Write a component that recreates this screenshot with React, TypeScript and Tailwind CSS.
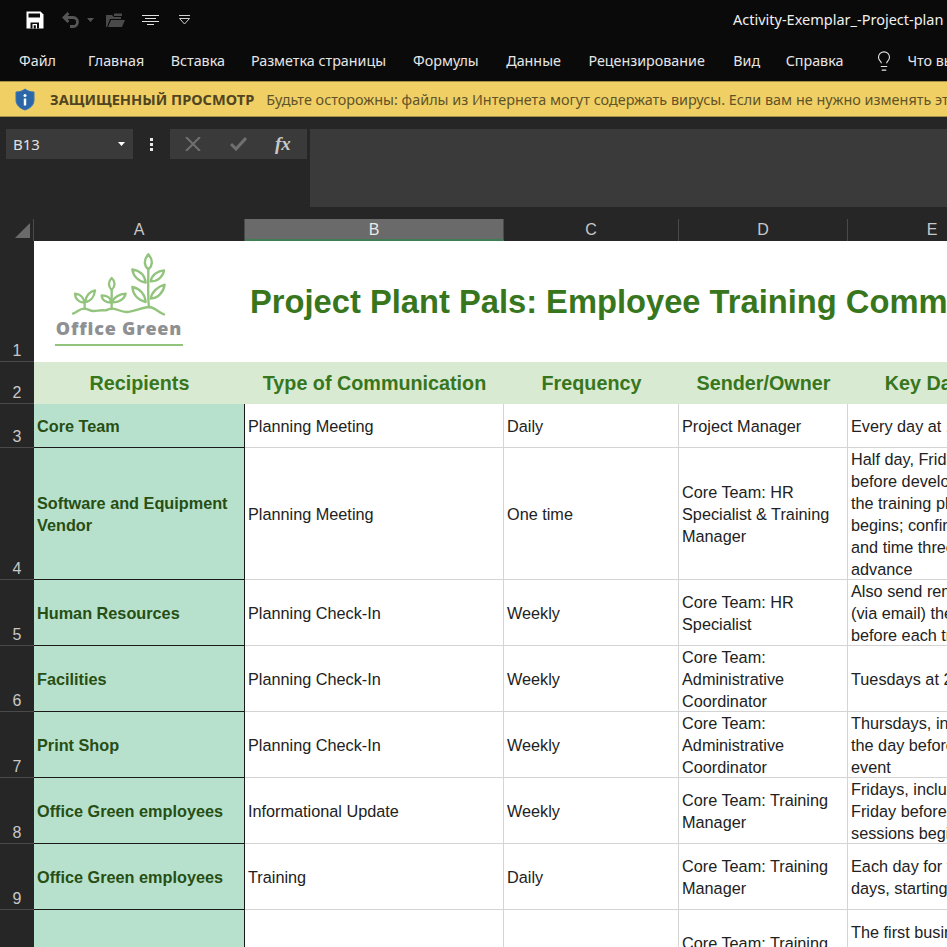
import React from 'react';
import { Lightbulb } from 'lucide-react';

const menu = [
  ['Файл', 'ml-[19px]'],
  ['Главная', 'ml-[32px]'],
  ['Вставка', 'ml-[26.500px]'],
  ['Разметка страницы', 'ml-[26px]'],
  ['Формулы', 'ml-[27px]'],
  ['Данные', 'ml-[27.500px]'],
  ['Рецензирование', 'ml-[27.500px]'],
  ['Вид', 'ml-[28.500px]'],
  ['Справка', 'ml-[25.500px]'],
];

const columns = [
  { label: 'A', className: 'w-[211px]' },
  { label: 'B', className: 'w-[259px] bg-[#6a6a6a] border-b-2 border-b-[#3f7d55] text-[#e8e8e8]' },
  { label: 'C', className: 'w-[175px]' },
  { label: 'D', className: 'w-[169px]' },
  { label: 'E', className: 'w-[169px]' },
];

const rows = [
  { n: 3, h: 'h-[44px]', a: ['Core Team'], b: 'Planning Meeting', c: 'Daily', d: ['Project Manager'], e: ['Every day at 10:00 a.m.'] },
  {
    n: 4,
    h: 'h-[132px]',
    a: ['Software and Equipment', 'Vendor'],
    b: 'Planning Meeting',
    c: 'One time',
    d: ['Core Team: HR', 'Specialist & Training', 'Manager'],
    e: ['Half day, Friday', 'before development', 'the training plan', 'begins; confirm date', 'and time three days', 'advance'],
  },
  { n: 5, h: 'h-[66px]', a: ['Human Resources'], b: 'Planning Check-In', c: 'Weekly', d: ['Core Team: HR', 'Specialist'], e: ['Also send reminder', '(via email) the day', 'before each training'] },
  { n: 6, h: 'h-[66px]', a: ['Facilities'], b: 'Planning Check-In', c: 'Weekly', d: ['Core Team:', 'Administrative', 'Coordinator'], e: ['Tuesdays at 2:00 p.m.'] },
  { n: 7, h: 'h-[66px]', a: ['Print Shop'], b: 'Planning Check-In', c: 'Weekly', d: ['Core Team:', 'Administrative', 'Coordinator'], e: ['Thursdays, including', 'the day before the', 'event'] },
  { n: 8, h: 'h-[66px]', a: ['Office Green employees'], b: 'Informational Update', c: 'Weekly', d: ['Core Team: Training', 'Manager'], e: ['Fridays, including the', 'Friday before training', 'sessions begin'] },
  { n: 9, h: 'h-[66px]', a: ['Office Green employees'], b: 'Training', c: 'Daily', d: ['Core Team: Training', 'Manager'], e: ['Each day for five', 'days, starting'] },
  { n: 10, h: 'h-[66px]', a: [''], b: '', c: '', d: ['', 'Core Team: Training', 'Manager'], e: ['The first business day', 'after trainings end'] },
];

function Logo() {
  const c = '#93c47d';
  return (
    <div className="flex flex-col items-center w-[130px]">
      <svg width="100" height="65" viewBox="60 20 300 195" fill="none" stroke={c} strokeWidth="7" strokeLinecap="round" strokeLinejoin="round">
        <path d="M72 205C85 200 92 190 105 190C118 190 122 198 135 197C148 196 155 194 165 195C175 196 178 189 190 190C205 191 215 199 232 200C248 201 280 186 300 185C318 186 328 202 345 207" />
        <path d="M107 190V168M188 190V132M300 185C296 160 298 110 298 72" />
        <path d="M105 172C90 172 78 160 78 145C95 147 105 158 105 172ZM109 170C110 152 122 138 138 135C136 154 125 168 109 170Z" />
        <path d="M188 134C176 122 178 108 188 98C199 108 200 122 188 134ZM186 172C170 172 158 163 158 150C174 150 186 158 186 172ZM190 171C193 156 212 146 230 145C226 162 208 172 190 171Z" />
        <path d="M298 72C284 60 284 42 298 27C312 42 312 60 298 72ZM290 112C268 108 252 92 250 72C272 76 288 90 290 112ZM305 108C308 90 326 76 345 75C342 95 326 108 305 108ZM290 170C268 164 252 148 250 125C272 130 288 146 290 170ZM305 160C308 140 328 122 347 118C344 140 328 158 305 160Z" />
      </svg>
      <div className="font-['Open_Sans','Noto_Sans',sans-serif] font-extrabold text-[18px] leading-[22px] tracking-[0.800px] text-[#8e9092] whitespace-nowrap">Office Green</div>
      <div className="w-[128px] h-[2px] bg-[#93c47d] mt-[5px]" />
    </div>
  );
}

function SaveIcon() {
  return (
    <svg width="18" height="18" viewBox="0 0 18 18">
      <path d="M0.500 0.500H14.500L17.500 3.500V17.500H0.500Z" fill="#ffffff" />
      <path d="M2.500 2.500H14V6.500H2.500Z" fill="#0a0a0a" />
      <path d="M4.500 11.500H13V17.500H4.500Z" fill="#0a0a0a" />
      <path d="M6.500 13H11V17.500H9.800V14.200H7.700V17.500H6.500Z" fill="#ffffff" />
    </svg>
  );
}

function ShieldIcon() {
  return (
    <svg width="20" height="23" viewBox="0 0 20 23">
      <path d="M10 1c2.500 2 5.500 3 9 3v8c0 5-4 8.500-9 10C5 20.500 1 17 1 12V4c3.500 0 6.500-1 9-3Z" fill="#2a66a8" stroke="#3c76b4" />
      <circle cx="10" cy="7.500" r="1.500" fill="#ffffff" />
      <rect x="8.800" y="10.500" width="2.400" height="7" fill="#ffffff" />
    </svg>
  );
}

export default function App() {
  return (
    <div className="w-[947px] h-[947px] overflow-hidden bg-[#262626] font-['Noto_Sans','Open_Sans',sans-serif]">
      {/* title bar */}
      <div className="h-[40px] bg-[#0a0a0a] flex items-center">
        <div className="ml-[26px] flex"><SaveIcon /></div>
        <svg className="ml-[18px] shrink-0" width="20" height="16" viewBox="0 0 20 16" fill="none" stroke="#555555" strokeWidth="2.800">
          <path d="M6.500 1 2 5.500 6.500 10M2 5.500h9c6 0 6 9 0 9H8" />
        </svg>
        <svg className="ml-[5px] shrink-0" width="8" height="5" viewBox="0 0 8 5" fill="#555555"><path d="M0 0h7L3.500 4Z" /></svg>
        <svg className="ml-[11px] shrink-0" width="19" height="16" viewBox="0 0 19 16" fill="#4a4a4a">
          <path d="M0 3h6l2 2h7v2H4L1 15H0ZM5 8h14l-3 7H2Z" />
          <path d="M8 1.500h8V4H8Z" />
        </svg>
        <svg className="ml-[17px] shrink-0" width="17" height="11" viewBox="0 0 17 11" stroke="#e0e0e0" strokeWidth="1">
          <path d="M0 .5h17M3 3.500h11M0 6.500h17M5 9.500h7" />
        </svg>
        <svg className="ml-[19px] shrink-0" width="13" height="10" viewBox="0 0 13 10" fill="none" stroke="#d0d0d0">
          <path d="M1 .5h11M1.500 3.500h10L6.500 9Z" />
        </svg>
        <div className="ml-[542px] text-[14.500px] text-[#f0f0f0] whitespace-nowrap">Activity-Exemplar_-Project-plan</div>
      </div>

      {/* menu */}
      <div className="h-[41px] pt-[1px] bg-[#0a0a0a] flex items-center text-[14.300px] text-[#e6e6e6] whitespace-nowrap">
        {menu.map(([label, ml]) => (
          <div key={label} className={`${ml} shrink-0`}>{label}</div>
        ))}
        <Lightbulb className="ml-[30px] shrink-0 text-[#e6e6e6]" size={22} strokeWidth={1.200} />
        <div className="ml-[12px] shrink-0">Что вы хотите сделать?</div>
      </div>

      {/* protected view */}
      <div className="h-[36px] pt-[1px] bg-[#f0cf65] border-y border-y-[#a68f47] flex items-center whitespace-nowrap">
        <div className="ml-[15px] flex shrink-0"><ShieldIcon /></div>
        <div className="ml-[15px] shrink-0 text-[14.600px] font-bold text-[#4f4520]">ЗАЩИЩЕННЫЙ ПРОСМОТР</div>
        <div className="ml-[12px] shrink-0 text-[14.400px] text-[#5f5428]">Будьте осторожны: файлы из Интернета могут содержать вирусы. Если вам не нужно изменять этот документ</div>
      </div>

      {/* formula bar */}
      <div className="h-[102px] flex items-start pt-[12px]">
        <div className="ml-[6px] w-[127px] h-[30px] shrink-0 bg-[#3a3a3a] flex items-center justify-between pl-[7px] pr-[8px] text-[15px] text-[#e0e0e0]">
          B13
          <svg width="7" height="4" viewBox="0 0 7 4" fill="#ffffff"><path d="M0 0h7L3.500 4Z" /></svg>
        </div>
        <div className="ml-[17px] w-[4px] h-[30px] shrink-0 flex flex-col justify-center gap-[2px]">
          <div className="w-[3px] h-[3px] bg-[#e8e8e8]" />
          <div className="w-[3px] h-[3px] bg-[#e8e8e8]" />
          <div className="w-[3px] h-[3px] bg-[#e8e8e8]" />
        </div>
        <div className="ml-[16px] w-[137px] h-[30px] shrink-0 bg-[#3a3a3a] flex items-center">
          <svg className="ml-[15px] shrink-0" width="16" height="14" viewBox="0 0 16 14" stroke="#707070" strokeWidth="2"><path d="M1 0 15 14M15 0 1 14" /></svg>
          <svg className="ml-[29px] shrink-0" width="17" height="14" viewBox="0 0 17 14" fill="none" stroke="#707070" strokeWidth="3"><path d="M1 7l5 5L16 1" /></svg>
          <div className="ml-[28px] font-['Liberation_Serif',serif] italic font-bold text-[19px] text-[#c8c8c8]">fx</div>
        </div>
        <div className="ml-[3px] flex-1 h-[78px] bg-[#3a3a3a]" />
      </div>

      {/* column headers */}
      <div className="h-[22px] flex text-[#c8c8c8] text-[16px] leading-[22px] font-['Liberation_Sans',sans-serif]">
        <div className="w-[34px] shrink-0 relative border-r border-r-[#4a4a4a]">
          <svg className="absolute right-[3px] bottom-[3px]" width="15" height="15" viewBox="0 0 15 15" fill="#6a6a6a"><path d="M15 0v15H0Z" /></svg>
        </div>
        {columns.map((col) => (
          <div key={col.label} className={`${col.className} shrink-0 text-center border-r border-r-[#4a4a4a]`}>{col.label}</div>
        ))}
      </div>

      {/* sheet */}
      <div className="font-['Liberation_Sans',sans-serif] text-[16.250px] leading-[22px] text-[#222222]">
        <div className="flex h-[121px]">
          <RowNumber n={1} />
          <div className="w-[211px] bg-white shrink-0 flex pt-[11px] pl-[20px]"><Logo /></div>
          <div className="flex-1 bg-white flex items-center whitespace-nowrap overflow-hidden pl-[5px]">
            <div className="font-bold text-[32.700px] leading-[38px] text-[#38761d]">Project Plant Pals: Employee Training Communication Plan</div>
          </div>
        </div>
        <div className="flex h-[42px]">
          <RowNumber n={2} />
          {[
            ['Recipients', 'w-[211px]'],
            ['Type of Communication', 'w-[259px]'],
            ['Frequency', 'w-[175px]'],
            ['Sender/Owner', 'w-[169px]'],
            ['Key Dates', 'w-[169px]'],
          ].map(([t, w]) => (
            <div key={t} className={`${w} shrink-0 bg-[#d9ead3] text-[#38761d] font-bold text-[19.750px] flex items-center justify-center whitespace-nowrap`}>{t}</div>
          ))}
        </div>
        {rows.map((r) => (
          <div key={r.n} className={`flex ${r.h}`}>
            <RowNumber n={r.n} />
            <div className="w-[211px] shrink-0 bg-[#b7e1cd] border-b border-r border-b-[#1a1a1a] border-r-[#1a1a1a] flex flex-col justify-center pt-[1px] px-[3px] font-bold text-[#274e13]">
              {r.a.map((l, i) => <div key={i} className="whitespace-nowrap">{l}</div>)}
            </div>
            <Cell w="w-[259px]" lines={[r.b]} />
            <Cell w="w-[175px]" lines={[r.c]} />
            <Cell w="w-[169px]" lines={r.d} />
            <Cell w="w-[169px]" lines={r.e} />
          </div>
        ))}
      </div>
    </div>
  );
}

function RowNumber({ n }: { n: number }) {
  return (
    <div className="w-[34px] shrink-0 bg-[#262626] border-b border-b-[#4a4a4a] flex items-end justify-center text-[#c8c8c8] text-[16px] leading-[20px]">
      {n}
    </div>
  );
}

function Cell({ w, lines }: { w: string; lines: string[] }) {
  return (
    <div className={`${w} shrink-0 bg-white border-b border-r border-b-[#d4d4d4] border-r-[#d4d4d4] flex flex-col justify-center pt-[1px] px-[3px] overflow-hidden`}>
      {lines.map((l, i) => <div key={i} className="whitespace-nowrap h-[22px] shrink-0">{l}</div>)}
    </div>
  );
}
